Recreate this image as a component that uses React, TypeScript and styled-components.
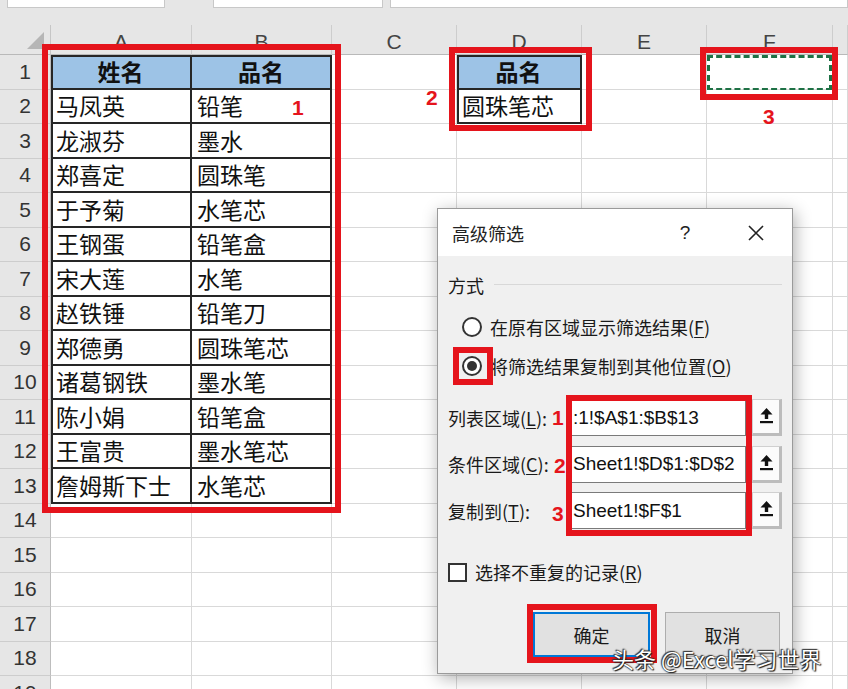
import * as React from "react";
import styled, { createGlobalStyle } from "styled-components";

const CJK = `"Noto Sans CJK SC", "Noto Sans", sans-serif`;
const LATIN = `"Liberation Sans", "Noto Sans CJK SC", sans-serif`;
const RED = "#e5141c";

const GlobalStyle = createGlobalStyle`
  *, *::before, *::after { box-sizing: border-box; }
  html, body { margin: 0; padding: 0; background: #fff; }
  body { overflow: hidden; }
`;

const Page = styled.div`
  position: relative;
  width: 848px;
  height: 689px;
  overflow: hidden;
  background: #fff;
  font-family: ${CJK};
`;

/* ---------- formula bar strip + grey band ---------- */

const TopBar = styled.div`
  display: flex;
  height: 8px;
  padding-left: 7px;
  background: #e6e6e6;
`;

const TopBox = styled.div<{ $w?: number; $ml?: number }>`
  width: ${(p) => (p.$w ? `${p.$w}px` : "auto")};
  flex: ${(p) => (p.$w ? "none" : 1)};
  margin-left: ${(p) => p.$ml ?? 0}px;
  background: #fff;
  border: 1px solid #c8c8c8;
  border-top: none;
`;

const Band = styled.div`
  height: 17px;
  background: #e6e6e6;
`;

/* ---------- grid ---------- */

const Sheet = styled.div`
  display: grid;
  grid-template-columns: 51px 141px 140px 125px 125px 125px 126px 15px;
  grid-template-rows: 30px repeat(19, 34.5px);
`;

const Corner = styled.div`
  background: #e6e6e6;
  border-right: 1px solid #c6c6c6;
  border-bottom: 1px solid #b9b9b9;
  display: flex;
  align-items: flex-end;
  justify-content: flex-end;
  padding: 0 6px 5px 0;
`;

const ColHead = styled.div`
  background: #e6e6e6;
  border-right: 1px solid #cdcdcd;
  border-bottom: 1px solid #b9b9b9;
  display: flex;
  align-items: center;
  justify-content: center;
  padding-top: 4px;
  font-family: ${LATIN};
  font-size: 21px;
  color: #444;
`;

const RowHead = styled.div`
  background: #e6e6e6;
  border-right: 1px solid #bdbdbd;
  border-bottom: 1px solid #cdcdcd;
  display: flex;
  align-items: center;
  justify-content: center;
  font-family: ${LATIN};
  font-size: 21px;
  color: #333;
`;

const Cell = styled.div<{
  $boxed?: boolean;
  $head?: boolean;
  $top?: boolean;
  $left?: boolean;
}>`
  position: relative;
  display: flex;
  align-items: center;
  justify-content: ${(p) => (p.$head ? "center" : "flex-start")};
  padding-left: ${(p) => (p.$head ? 0 : 5)}px;
  font-size: 23px;
  line-height: 1;
  font-weight: ${(p) => (p.$head ? 700 : 400)};
  color: #111;
  white-space: nowrap;
  background: ${(p) => (p.$head ? "#9dc3e6" : "#fff")};
  border-right: ${(p) => (p.$boxed ? "2px solid #262626" : "1px solid #d9d9d9")};
  border-bottom: ${(p) => (p.$boxed ? "2px solid #262626" : "1px solid #d9d9d9")};
  box-shadow: ${(p) =>
    p.$top || p.$left
      ? `inset ${p.$left ? 2 : 0}px ${p.$top ? 2 : 0}px 0 #262626`
      : "none"};
`;

const Marquee = styled.div`
  position: absolute;
  inset: 0 0 -2px 0;
  border: 3px dashed #1e7145;
`;

/* ---------- annotations ---------- */

const Mark = styled.div<{ $x: number; $y: number; $w: number; $h: number }>`
  position: absolute;
  left: ${(p) => p.$x}px;
  top: ${(p) => p.$y}px;
  width: ${(p) => p.$w}px;
  height: ${(p) => p.$h}px;
  border: 6px solid ${RED};
  pointer-events: none;
`;

const Tag = styled.div<{ $x: number; $y: number }>`
  position: absolute;
  left: ${(p) => p.$x}px;
  top: ${(p) => p.$y}px;
  font-family: ${LATIN};
  font-weight: 700;
  font-size: 21px;
  line-height: 21px;
  color: ${RED};
`;

const Watermark = styled.div`
  position: absolute;
  left: 612px;
  top: 645px;
  font-family: ${CJK};
  font-size: 22px;
  line-height: 26px;
  color: #fff;
  white-space: nowrap;
  text-shadow: 0 0 2px #000, 1px 1px 1px #222, -1px -1px 1px #444;
`;

/* ---------- dialog ---------- */

const Dialog = styled.div`
  position: absolute;
  left: 437px;
  top: 208px;
  width: 356px;
  height: 466px;
  border: 1px solid #9a9a9a;
  background: #f0f0f0;
  box-shadow: 2px 4px 16px rgba(0, 0, 0, 0.32);
  display: flex;
  flex-direction: column;
  font-family: ${CJK};
  font-size: 18px;
  color: #1a1a1a;
`;

const TitleBar = styled.div`
  height: 47px;
  background: #fff;
  display: flex;
  align-items: center;
  padding: 0 16px 0 14px;
`;

const Title = styled.span`
  flex: 1;
  font-size: 18px;
  color: #222;
`;

const TitleButton = styled.span<{ $ml?: number }>`
  width: 40px;
  margin-left: ${(p) => p.$ml ?? 0}px;
  display: flex;
  justify-content: center;
  align-items: center;
  font-family: ${LATIN};
  font-size: 19px;
  color: #222;
`;

const Body = styled.div`
  flex: 1;
  display: flex;
  flex-direction: column;
  padding: 17px 10px 16px 10px;
`;

const GroupHead = styled.div`
  display: flex;
  align-items: center;
  gap: 10px;
  height: 24px;
  &::after {
    content: "";
    flex: 1;
    border-top: 1px solid #d8d8d8;
    margin-top: -2px;
  }
`;

const RadioList = styled.div`
  margin-top: 10px;
  padding-left: 14px;
`;

const RadioRow = styled.div`
  height: 39px;
  display: flex;
  align-items: center;
  gap: 8px;
  white-space: nowrap;
`;

const Radio = styled.span<{ $on?: boolean }>`
  width: 20px;
  height: 20px;
  border-radius: 50%;
  border: 2px solid #333;
  background: #fff;
  display: inline-flex;
  align-items: center;
  justify-content: center;
  &::after {
    content: "";
    width: 10px;
    height: 10px;
    border-radius: 50%;
    background: ${(p) => (p.$on ? "#333" : "transparent")};
  }
`;

const Fields = styled.div`
  margin-top: 14px;
  display: flex;
  flex-direction: column;
  gap: 9.5px;
`;

const FieldRow = styled.div`
  display: flex;
  align-items: center;
  height: 37px;
`;

const FieldLabel = styled.span`
  width: 122px;
  white-space: nowrap;
`;

const RangeInput = styled.div`
  width: 176px;
  height: 37px;
  background: #fff;
  border: 1px solid #7a7a7a;
  display: flex;
  align-items: center;
  padding-left: 2px;
  overflow: hidden;
  white-space: nowrap;
  font-family: ${LATIN};
  font-size: 19px;
  color: #111;
`;

const PickButton = styled.span`
  width: 30px;
  height: 37px;
  margin-left: 6px;
  background: #fbfbfb;
  border: 1px solid #d0d0d0;
  border-right: 3px solid #bcbcbc;
  border-bottom: 3px solid #bcbcbc;
  display: flex;
  align-items: flex-start;
  justify-content: center;
  padding-top: 7px;
`;

const CheckRow = styled.div`
  margin-top: 33px;
  display: flex;
  align-items: center;
  gap: 8px;
  height: 20px;
`;

const CheckBox = styled.span`
  width: 19px;
  height: 19px;
  border: 2px solid #333;
  background: #fff;
`;

const Buttons = styled.div`
  margin-top: auto;
  display: flex;
  justify-content: flex-end;
  gap: 15px;
  padding-right: 2px;
`;

const Button = styled.span<{ $primary?: boolean }>`
  width: ${(p) => (p.$primary ? 117 : 115)}px;
  height: 45px;
  display: flex;
  align-items: center;
  justify-content: center;
  background: #e1e1e1;
  border: ${(p) => (p.$primary ? "2px solid #0078d7" : "1px solid #adadad")};
  font-size: 18px;
  color: #1a1a1a;
`;

const UpIcon = () => (
  <svg width="15" height="17" viewBox="0 0 15 17">
    <path d="M7.5 1 L13.5 7.5 H9.2 V12 H5.8 V7.5 H1.5 Z" fill="#111" />
    <rect x="1" y="14" width="13" height="2.2" fill="#111" />
  </svg>
);

const CloseIcon = () => (
  <svg width="18" height="18" viewBox="0 0 18 18">
    <path d="M2 2 L16 16 M16 2 L2 16" stroke="#222" strokeWidth="1.6" />
  </svg>
);

const CornerIcon = () => (
  <svg width="17" height="17" viewBox="0 0 17 17">
    <polygon points="17,0 17,17 0,17" fill="#b6b6b6" />
  </svg>
);

/* ---------- data ---------- */

// G is only a sliver at the right edge, its letter is off screen
const COLS = ["A", "B", "C", "D", "E", "F", ""];

const table: [string, string][] = [
  ["姓名", "品名"],
  ["马凤英", "铅笔"],
  ["龙淑芬", "墨水"],
  ["郑喜定", "圆珠笔"],
  ["于予菊", "水笔芯"],
  ["王钢蛋", "铅笔盒"],
  ["宋大莲", "水笔"],
  ["赵铁锤", "铅笔刀"],
  ["郑德勇", "圆珠笔芯"],
  ["诸葛钢铁", "墨水笔"],
  ["陈小娟", "铅笔盒"],
  ["王富贵", "墨水笔芯"],
  ["詹姆斯下士", "水笔芯"],
];

const criteria = ["品名", "圆珠笔芯"];

const rows = Array.from({ length: 19 }, (_, i) => i + 1);

const textAt = (r: number, c: number) => {
  if (c < 2) return r <= table.length ? table[r - 1][c] : "";
  if (c === 3) return r <= criteria.length ? criteria[r - 1] : "";
  return "";
};

const isBoxed = (r: number, c: number) =>
  (c < 2 && r <= table.length) || (c === 3 && r <= criteria.length);

const U = styled.u`
  text-underline-offset: 2px;
`;

const App: React.FC = () => {
  return (
    <Page>
      <GlobalStyle />
      <TopBar>
        <TopBox $w={158} />
        <TopBox $w={170} $ml={48} />
        <TopBox $ml={7} />
      </TopBar>
      <Band />
      <Sheet>
        <Corner>
          <CornerIcon />
        </Corner>
        {COLS.map((c, i) => (
          <ColHead key={i}>{c}</ColHead>
        ))}
        {rows.map((r) => (
          <React.Fragment key={r}>
            <RowHead>{r}</RowHead>
            {COLS.map((_, c) => {
              const boxed = isBoxed(r, c);
              return (
                <Cell
                  key={c}
                  $boxed={boxed}
                  $head={boxed && r === 1}
                  $top={boxed && r === 1}
                  $left={boxed && (c === 0 || c === 3)}
                >
                  {textAt(r, c)}
                  {r === 1 && c === 5 && <Marquee />}
                </Cell>
              );
            })}
          </React.Fragment>
        ))}
      </Sheet>

      <Dialog>
        <TitleBar>
          <Title>高级筛选</Title>
          <TitleButton>?</TitleButton>
          <TitleButton $ml={31}>
            <CloseIcon />
          </TitleButton>
        </TitleBar>
        <Body>
          <GroupHead>方式</GroupHead>
          <RadioList>
            <RadioRow>
              <Radio />
              <span>
                在原有区域显示筛选结果(<U>F</U>)
              </span>
            </RadioRow>
            <RadioRow>
              <Radio $on />
              <span>
                将筛选结果复制到其他位置(<U>O</U>)
              </span>
            </RadioRow>
          </RadioList>
          <Fields>
            <FieldRow>
              <FieldLabel>
                列表区域(<U>L</U>):
              </FieldLabel>
              <RangeInput>:1!$A$1:$B$13</RangeInput>
              <PickButton>
                <UpIcon />
              </PickButton>
            </FieldRow>
            <FieldRow>
              <FieldLabel>
                条件区域(<U>C</U>):
              </FieldLabel>
              <RangeInput>Sheet1!$D$1:$D$2</RangeInput>
              <PickButton>
                <UpIcon />
              </PickButton>
            </FieldRow>
            <FieldRow>
              <FieldLabel>
                复制到(<U>T</U>):
              </FieldLabel>
              <RangeInput>Sheet1!$F$1</RangeInput>
              <PickButton>
                <UpIcon />
              </PickButton>
            </FieldRow>
          </Fields>
          <CheckRow>
            <CheckBox />
            <span>
              选择不重复的记录(<U>R</U>)
            </span>
          </CheckRow>
          <Buttons>
            <Button $primary>确定</Button>
            <Button>取消</Button>
          </Buttons>
        </Body>
      </Dialog>

      <Mark $x={42} $y={44} $w={299} $h={469} />
      <Mark $x={449} $y={47} $w={143} $h={84} />
      <Mark $x={700} $y={47} $w={138} $h={53} />
      <Mark $x={453} $y={347} $w={40} $h={38} />
      <Mark $x={566} $y={395} $w={186} $h={141} />
      <Mark $x={527} $y={604} $w={130} $h={59} />

      <Tag $x={292} $y={97}>1</Tag>
      <Tag $x={426} $y={87}>2</Tag>
      <Tag $x={763} $y={106}>3</Tag>
      <Tag $x={552} $y={407}>1</Tag>
      <Tag $x={554} $y={455}>2</Tag>
      <Tag $x={552} $y={503}>3</Tag>

      <Watermark>头条 @Excel学习世界</Watermark>
    </Page>
  );
};

export default App;
